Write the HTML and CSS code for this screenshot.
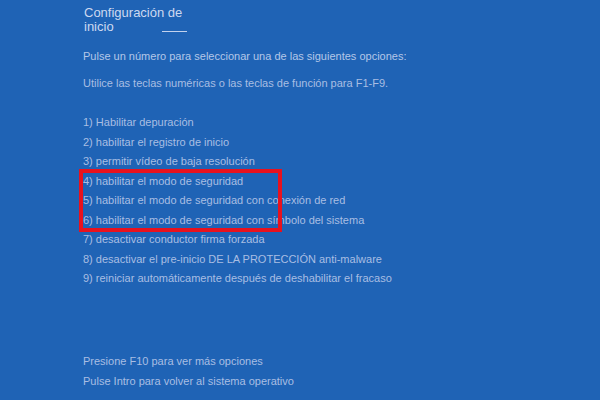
FILE: index.html
```html
<!DOCTYPE html>
<html lang="es">
<head>
  <meta charset="UTF-8" />
  <title>Configuración de inicio</title>
  <link rel="stylesheet" href="styles.css">
</head>
<body>
  <div class="screen">
    <h1 class="title">Configuración de<br>inicio <span class="mark"></span></h1>

    <p class="intro">Pulse un número para seleccionar una de las siguientes opciones:</p>
    <p class="hint">Utilice las teclas numéricas o las teclas de función para F1-F9.</p>

    <ul class="options">
      <li>1) Habilitar depuración</li>
      <li>2) habilitar el registro de inicio</li>
      <li>3) permitir vídeo de baja resolución</li>
      <li>4) habilitar el modo de seguridad</li>
      <li>5) habilitar el modo de seguridad con conexión de red</li>
      <li>6) habilitar el modo de seguridad con símbolo del sistema</li>
      <li>7) desactivar conductor firma forzada</li>
      <li>8) desactivar el pre-inicio DE LA PROTECCIÓN anti-malware</li>
      <li>9) reiniciar automáticamente después de deshabilitar el fracaso</li>
    </ul>
    <div class="highlight"></div>

    <div class="footer">
      <p>Presione F10 para ver más opciones</p>
      <p>Pulse Intro para volver al sistema operativo</p>
    </div>
  </div>
</body>
</html>
```

FILE: styles.css
```css
* {
  margin: 0;
  padding: 0;
  box-sizing: border-box;
}

body {
  background-color: #1f63b5;
  font-family: "Liberation Sans", Arial, sans-serif;
  color: #a9bee3;
  width: 600px;
  height: 400px;
  overflow: hidden;
}

.screen {
  position: relative;
  height: 400px;
  padding: 6px 0 0 83px;
  display: flex;
  flex-direction: column;
}

.title {
  font-size: 13px;
  font-weight: normal;
  line-height: 14px;
  color: #cdd9f0;
  padding-left: 1px;
}

.mark {
  display: inline-block;
  width: 25px;
  height: 1px;
  margin-left: 45px;
  border-bottom: 1px solid #c2d2ee;
  vertical-align: -1px;
}

.intro,
.hint,
.options li,
.footer p {
  font-size: 11px;
  line-height: 19.5px;
}

.intro {
  margin-top: 13px;
  color: #b4c7e8;
}

.hint {
  margin-top: 7px;
}

.options {
  list-style: none;
  margin-top: 20px;
}

.highlight {
  position: absolute;
  left: 79px;
  top: 169px;
  width: 203px;
  height: 63px;
  border: 4px solid #e8121e;
}

.footer {
  margin-top: auto;
  padding-bottom: 9px;
}
```
